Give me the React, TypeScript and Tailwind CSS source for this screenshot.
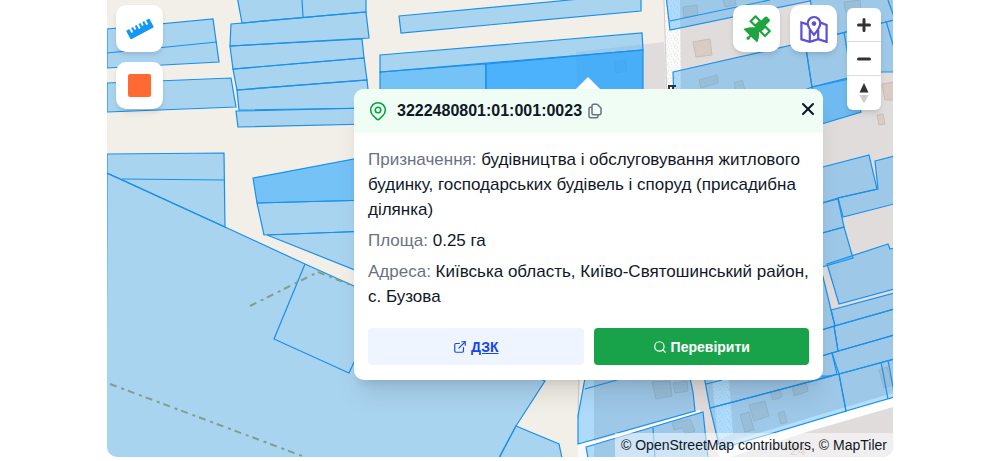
import { ExternalLink, Search, X } from "lucide-react";
import { HiOutlineDocumentDuplicate, HiOutlineLocationMarker } from "react-icons/hi";
import { cva } from "class-variance-authority";
import type { ButtonHTMLAttributes, ReactNode } from "react";

const parcel = cva("stroke-[#1a90ea] stroke-[1.2]", {
  variants: {
    tone: {
      light: "fill-[#22a3ff]/35",
      medium: "fill-[#22a3ff]/60",
      strong: "fill-[#22a3ff]/80",
      outline: "fill-none",
    },
  },
  defaultVariants: { tone: "light" },
});

const lightParcels = [
  // left block
  "107,29 213,19 219,62 107,68",
  "107,83 231,78 236,107 107,112",
  "237,-4 366,-4 366,12 242,23",
  "231,24 366,12 369,38 230,46",
  "230,46 362,39 364,58 233,69",
  "233,69 364,58 367,80 237,90",
  "237,90 367,80 370,108 239,110",
  "236,111 370,108 370,124 238,127",
  "107,154 224,153 225,227 107,173",
  // large field
  "107,173 225,227 305,264 354,286 545,381 516,426 499,458 106,458",
  "516,426 559,444 562,458 499,458",
  "257,203 370,200 370,231 264,235",
  "267,235 370,231 370,276",
  // above the popup
  "399,16 570,0 641,-8 641,11 401,33",
  "380,55 642,33 643,50 380,72",
  // north east
  "666,-4 812,-4 810,1 670,30",
  "810,-4 894,-4 894,20 815,40",
  "673,72 805,42 812,87 780,100 674,100",
  "805,42 894,20 894,72 882,72 812,87",
  // east
  "815,169 869,155 877,189 838,198 815,205",
  "875,161 894,156 894,204 843,217 838,198 878,189",
  "815,205 838,199 844,227 815,235",
  "815,235 844,227 853,258 815,269",
  "827,264 888,244 890,249 894,248 894,289 839,304",
  "831,310 894,293 894,309 835,326",
  "815,250 823,277 835,326 815,332",
  "834,326 894,309 894,335 838,351",
  "815,332 834,326 838,351 815,358",
  "832,353 894,335 894,359 839,374",
  "815,358 832,353 837,374 815,380",
  "839,374 894,359 894,397 846,411",
  // south east
  "585,378 690,378 693,392 695,411 578,444 578,416",
  "586,447 703,412 708,458 588,458",
  "704,376 832,376 710,408",
  "710,408 839,374 846,411 720,449",
];

const parcelEdges = [
  "302,0 303,17",
  "107,53 217,42",
  "122,179 224,180",
  "670,21 770,0",
  "844,32 852,80",
  "886,21 894,48",
  "888,0 894,17",
  "585,389 617,380",
  "653,428 655,458",
  "706,384 722,380",
  "881,362 888,399",
  "888,360 894,392",
];

const buildings = [
  "614,62 625,60 627,71 616,73",
  "693,42 710,39 712,55 696,57",
  "683,7 697,5 698,15 684,17",
  "723,0 735,-2 736,5 725,7",
  "844,2 860,0 861,12 846,13",
  "699,80 717,75 718,83 701,88",
  "734,83 742,80 745,90 736,92",
  "882,84 894,82 894,100 885,100",
  "877,115 883,114 885,124 879,125",
  "652,382 670,381 672,396 656,399",
  "673,383 687,381 688,391 675,393",
  "740,415 749,412 754,430 745,432",
  "749,405 765,401 769,416 754,421",
  "770,392 780,389 782,397 773,400",
  "778,413 784,411 787,422 781,424",
  "792,386 806,382 808,391 794,396",
  "879,370 887,367 892,385 884,388",
  "672,423 690,419 695,431 686,434 682,428 674,430",
];

function CadastreMap() {
  return (
    <svg
      className="absolute inset-0 size-full"
      viewBox="107 0 786 457"
      preserveAspectRatio="xMidYMid slice"
      aria-hidden="true"
    >
      <defs>
        <pattern id="gravel" width="9" height="8" patternUnits="userSpaceOnUse">
          <rect width="9" height="8" fill="#fbfafa" />
          <path d="M1 1h1M5 0h1M3 3h1M7 3h1M0 5h1M5 6h1M2 7h1M8 6h1" stroke="#e3dfdf" />
        </pattern>
      </defs>
      <rect x="100" width="800" height="460" fill="#f2efe9" />

      {/* residential area */}
      <path d="M576 52L664 42L667 100H578ZM680 0H900V460H592L594 380Z" fill="#e0dcdc" />
      <path d="M664 0H680L681 100L594 380V458H577L579 380L666 100Z" fill="url(#gravel)" />
      <path d="M577 378H594L593 458H577Z" fill="#faf9f9" />
      <path d="M562 378H580L578 418V458H562Z" fill="#f2efe9" />
      <path d="M664 0L667 100M579 380L578 418" stroke="#cfcaca" fill="none" />
      <path d="M712 378H729L733 434L718 440Z" fill="url(#gravel)" />
      <path d="M893 393L715 446L720 458H728L803 433L893 407Z" fill="#fff" />
      <path d="M578 446L700 410V412L584 448Z" fill="#fff" />
      {buildings.map((points) => (
        <polygon key={points} points={points} fill="#d8ccc3" stroke="#c9bdb4" />
      ))}
      <text x="790" y="455" className="font-['Liberation_Sans'] text-sm" fill="#c4ab9c">
        24
      </text>

      {lightParcels.map((points) => (
        <polygon key={points} points={points} className={parcel()} />
      ))}
      {parcelEdges.map((points) => (
        <polyline key={points} points={points} className={parcel({ tone: "outline" })} />
      ))}
      <polygon points="380,72 486,64 486,100 380,100" className={parcel({ tone: "medium" })} />
      <polygon points="253,178 370,156 370,200 257,203" className={parcel({ tone: "medium" })} />
      <polygon points="812,87 848,78 861,112 815,126" className={parcel({ tone: "medium" })} />
      <polygon points="486,64 643,50 643,100 486,100" className={parcel({ tone: "strong" })} />
      <polyline points="305,264 274,339 349,373 356,358" className={parcel({ tone: "outline" })} />

      {/* field boundaries */}
      <g fill="none" stroke="#7f9f8e" strokeWidth="2" strokeDasharray="7 5 3 4">
        <path d="M250 306L318 272L356 287" />
        <path d="M110 384L305 457" />
      </g>
      <path d="M668 86h8M669 86v4M673 86v4" stroke="#333" strokeWidth="2" />
    </svg>
  );
}

function RulerIcon() {
  return (
    <svg width="28" height="28" viewBox="0 0 28 28" aria-hidden="true">
      <g transform="rotate(-28 14 14)">
        <path
          d="M2 9h2.6v3.6a1 1 0 0 0 2 0V9h2.2v2.4a1 1 0 0 0 2 0V9h2.2v3.6a1 1 0 0 0 2 0V9h2.2v2.4a1 1 0 0 0 2 0V9h2.2v3.6a1 1 0 0 0 2 0V9H26a1.2 1.2 0 0 1 1.2 1.2v7.6A1.2 1.2 0 0 1 26 19H2a1.2 1.2 0 0 1-1.2-1.2v-7.6A1.2 1.2 0 0 1 2 9z"
          fill="#1597f8"
        />
      </g>
    </svg>
  );
}

function SatelliteIcon() {
  return (
    <svg width="28" height="28" viewBox="0 0 28 28" aria-hidden="true">
      <g fill="none" stroke="#1fa53f" strokeWidth="2.2" strokeLinejoin="round">
        <path d="M7.600 6.200L12.500 1.400L17.200 6L12.300 10.800z" />
        <path d="M22 11.400L26.800 16.100L22 21L17.200 16.300z" />
      </g>
      <path
        d="M21.800 2a1.700 1.700 0 0 1 2.400 0l2.200 2.200a1.700 1.700 0 0 1 0 2.400L16 17c.2 3.600-.2 7-1.800 10.600L8.200 21.900l-1.400.9a1.700 1.700 0 1 1-1.300-1.300l.9-1.400L.4 14c3.400-1.500 7.300-1.900 11-1.600z"
        fill="#1fa53f"
      />
    </svg>
  );
}

function MapPinnedIcon() {
  return (
    <svg width="28" height="28" viewBox="0 0 28 28" aria-hidden="true">
      <g fill="none" stroke="#5b50d6" strokeWidth="2.2">
        <path d="M7.500 9.400L1.400 7.400v17l8.400 2.500l8.400-2.800l8.400 2.800V9.900L20.500 7.600" />
        <path d="M9.800 15v11.500M18.200 15v9.500" />
        <path d="M14 19.800C10.600 15.800 7.700 12.500 7.700 8.300a6.300 6.300 0 0 1 12.600 0c0 4.200-2.900 7.500-6.300 11.500z" fill="#fff" />
      </g>
      <circle cx="14" cy="8.600" r="2.300" fill="#5b50d6" />
    </svg>
  );
}

type ToolButtonProps = ButtonHTMLAttributes<HTMLButtonElement> & { children: ReactNode };

function ToolButton({ children, ...props }: ToolButtonProps) {
  return (
    <button
      type="button"
      className="flex size-[47px] items-center justify-center rounded-[10px] bg-white shadow-md"
      {...props}
    >
      {children}
    </button>
  );
}

function ZoomControls() {
  return (
    <div className="absolute top-2 right-3 flex w-[34px] flex-col divide-y divide-[#ddd] rounded-md bg-white shadow-md">
      <button type="button" aria-label="Збільшити" className="flex h-[34px] items-center justify-center">
        <svg width="16" height="16" viewBox="0 0 16 16" stroke="#333" strokeWidth="3" strokeLinecap="round">
          <path d="M8 2.500v11M2.500 8h11" />
        </svg>
      </button>
      <button type="button" aria-label="Зменшити" className="flex h-[34px] items-center justify-center">
        <svg width="16" height="16" viewBox="0 0 16 16" stroke="#333" strokeWidth="3" strokeLinecap="round">
          <path d="M2.500 8h11" />
        </svg>
      </button>
      <button type="button" aria-label="На північ" className="flex h-[34px] items-center justify-center">
        <svg width="10" height="22" viewBox="0 0 10 22">
          <path d="M5 1L9.500 10.500H.5z" fill="#333" />
          <path d="M5 21.500L9.500 13H.5z" fill="#ccc" />
        </svg>
      </button>
    </div>
  );
}

function Field({ label, children }: { label: string; children: ReactNode }) {
  return (
    <p>
      <span className="text-gray-500">{label}:</span> {children}
    </p>
  );
}

function ParcelPopup() {
  return (
    <article className="absolute top-[89px] left-[247px] w-[469px] rounded-[10px] bg-white shadow-xl">
      <div className="absolute -top-3 left-[222px] h-3 w-6 bg-white [clip-path:polygon(50%_0,100%_100%,0_100%)]" />
      <header className="flex h-11 items-center rounded-t-[10px] bg-[#effdf4] pr-[5px] pl-[13px]">
        <HiOutlineLocationMarker className="mr-2 size-[22px] text-green-600" strokeWidth={1.7} aria-hidden="true" />
        <h2 className="text-base font-bold">3222480801:01:001:0023</h2>
        <button type="button" aria-label="Копіювати" className="ml-1 text-gray-500">
          <HiOutlineDocumentDuplicate className="size-[18px]" />
        </button>
        <button type="button" aria-label="Закрити" className="mb-1 ml-auto">
          <X className="size-5" strokeWidth={2.5} />
        </button>
      </header>
      <div className="px-3.5 pt-3.5 pb-[15px]">
        <div className="flex flex-col gap-1.5 text-[17px] leading-[25px]">
          <Field label="Призначення">
            будівництва і обслуговування житлового будинку, господарських будівель і споруд (присадибна ділянка)
          </Field>
          <Field label="Площа">0.25 га</Field>
          <Field label="Адреса">Київська область, Київо-Святошинський район, с. Бузова</Field>
        </div>
        <div className="mt-[19px] grid grid-cols-2 gap-2.5 text-sm font-bold">
          <a
            href="#dzk"
            className="flex h-[37px] items-center justify-center gap-1 rounded bg-[#eff5ff] text-blue-700"
          >
            <ExternalLink className="size-3.5" />
            <span className="underline">ДЗК</span>
          </a>
          <button
            type="button"
            className="flex h-[37px] items-center justify-center gap-1 rounded bg-[#18a34a] text-white"
          >
            <Search className="size-3.5" />
            Перевірити
          </button>
        </div>
      </div>
    </article>
  );
}

export default function App() {
  return (
    <main className="flex min-h-screen justify-center bg-white pb-1 font-['Liberation_Sans',Arial,sans-serif] text-gray-900">
      <section className="relative w-full max-w-[786px] overflow-hidden rounded-b-[10px]" aria-label="Кадастрова карта">
        <CadastreMap />
        <div className="absolute top-[5px] left-[9px] flex flex-col gap-2.5">
          <ToolButton aria-label="Лінійка">
            <RulerIcon />
          </ToolButton>
          <ToolButton aria-label="Площа">
            <span className="size-[23px] rounded-xs bg-[#ff6a33]" />
          </ToolButton>
        </div>
        <div className="absolute top-[5px] right-14 flex gap-2.5">
          <ToolButton aria-label="Супутник">
            <SatelliteIcon />
          </ToolButton>
          <ToolButton aria-label="Карта">
            <MapPinnedIcon />
          </ToolButton>
        </div>
        <ZoomControls />
        <ParcelPopup />
        <footer className="absolute right-0 bottom-0 bg-white/50 px-1.5 text-sm leading-6">
          © <a href="#osm">OpenStreetMap contributors</a>, © <a href="#maptiler">MapTiler</a>
        </footer>
      </section>
    </main>
  );
}
